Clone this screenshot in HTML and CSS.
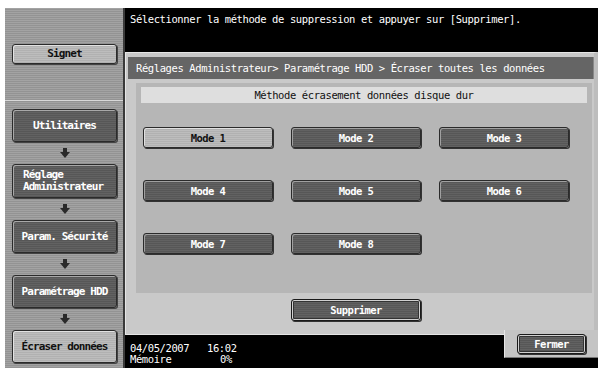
FILE: index.html
```html
<!DOCTYPE html>
<html lang="fr">
<head>
<meta charset="utf-8">
<title>Écraser toutes les données</title>
<link rel="stylesheet" href="styles.css">
</head>
<body>
<div class="screen">
  <aside class="sidebar">
    <div class="side-top">
      <button class="sbtn light">Signet</button>
    </div>
    <div class="side-bottom">
      <button class="sbtn dark">Utilitaires</button>
      <svg class="arrow" width="10" height="10" viewBox="0 0 10 10"><rect x="3" y="0" width="4" height="5" fill="#2a2a2a"/><polygon points="0,4 10,4 5,10" fill="#2a2a2a"/></svg>
      <button class="sbtn dark two">Réglage<br>Administrateur</button>
      <svg class="arrow" width="10" height="10" viewBox="0 0 10 10"><rect x="3" y="0" width="4" height="5" fill="#2a2a2a"/><polygon points="0,4 10,4 5,10" fill="#2a2a2a"/></svg>
      <button class="sbtn dark">Param. Sécurité</button>
      <svg class="arrow" width="10" height="10" viewBox="0 0 10 10"><rect x="3" y="0" width="4" height="5" fill="#2a2a2a"/><polygon points="0,4 10,4 5,10" fill="#2a2a2a"/></svg>
      <button class="sbtn dark">Paramétrage HDD</button>
      <svg class="arrow" width="10" height="10" viewBox="0 0 10 10"><rect x="3" y="0" width="4" height="5" fill="#2a2a2a"/><polygon points="0,4 10,4 5,10" fill="#2a2a2a"/></svg>
      <button class="sbtn light">Écraser données</button>
    </div>
  </aside>
  <main class="main">
    <div class="msg">Sélectionner la méthode de suppression et appuyer sur [Supprimer].</div>
    <section class="panel">
      <div class="titlebar">Réglages Administrateur&gt; Paramétrage HDD &gt; Écraser toutes les données</div>
      <div class="subpanel">
        <div class="label">Méthode écrasement données disque dur</div>
        <div class="grid">
          <button class="mbtn light">Mode 1</button>
          <button class="mbtn dark">Mode 2</button>
          <button class="mbtn dark">Mode 3</button>
          <button class="mbtn dark">Mode 4</button>
          <button class="mbtn dark">Mode 5</button>
          <button class="mbtn dark">Mode 6</button>
          <button class="mbtn dark">Mode 7</button>
          <button class="mbtn dark">Mode 8</button>
        </div>
      </div>
      <div class="actions">
        <button class="mbtn dark framed">Supprimer</button>
      </div>
    </section>
    <div class="bottom">
      <div class="status">
        <div class="srow"><span class="date">04/05/2007</span><span>16:02</span></div>
        <div class="srow"><span class="date">Mémoire</span><span class="pct">0%</span></div>
      </div>
      <div class="closebox">
        <button class="mbtn dark framed close">Fermer</button>
      </div>
    </div>
  </main>
</div>
</body>
</html>
```
FILE: styles.css
```css
* { box-sizing: border-box; }
html, body { margin: 0; padding: 0; background: #fff; }
body {
  padding: 8px 3px 0 5px;
  font-family: "DejaVu Sans Mono", "Liberation Mono", monospace;
  font-size: 10.5px;
  letter-spacing: -0.4px;
}
.screen {
  display: flex;
  width: 593px;
  height: 360px;
  overflow: hidden;
}
.sidebar {
  width: 120px;
  display: flex;
  flex-direction: column;
  background: repeating-linear-gradient(to bottom, #a3a3a3 0 1px, #939393 1px 2px);
  border-right: 2px solid #3a3a3a;
}
.side-top {
  height: 93px;
  padding: 36px 0 0 7px;
  border-bottom: 1px solid #d8d8d8;
}
.side-bottom {
  display: flex;
  flex-direction: column;
  align-items: flex-start;
  padding: 8px 0 0 7px;
}
.arrow {
  display: block;
  margin: 6px 0 6px 48px;
}
.sbtn {
  width: 105px;
  height: 33px;
  border: 1px solid #2b2b2b;
  border-radius: 3px;
  font-family: inherit;
  font-size: 11px;
  font-weight: bold;
  letter-spacing: -0.9px;
  padding: 0;
  box-shadow: inset 1px 1px 0 #a8a8a8, 1px 1px 0 #444;
  line-height: 12px;
}
.side-top .sbtn { height: 20px; }
.sbtn.two { height: 34px; text-align: left; padding-left: 10px; }
.dark {
  color: #fff;
  background: repeating-linear-gradient(to bottom, #626262 0 1px, #575757 1px 2px);
}
.light {
  color: #111;
  background: repeating-linear-gradient(to bottom, #bdbdbd 0 1px, #b1b1b1 1px 2px);
  box-shadow: inset 1px 1px 0 #e2e2e2, 1px 1px 0 #444;
}
.main {
  flex: 1;
  display: flex;
  flex-direction: column;
  background: #000;
}
.msg {
  height: 44px;
  color: #fff;
  padding: 5px 0 0 5px;
  white-space: nowrap;
}
.panel {
  height: 283px;
  background: #c9c9c9;
  border: 1px solid #e6e6e6;
  border-right: 4px solid #bdbdbd;
  padding: 4px 0 0 2px;
  display: flex;
  flex-direction: column;
}
.titlebar {
  height: 22px;
  background: #656565;
  color: #fff;
  padding: 5px 0 0 8px;
  white-space: nowrap;
  border-right: 1px solid #888;
}
.subpanel {
  margin: 4px 2px 0 8px;
  height: 210px;
  background: #b6b6b6;
  padding: 4px 5px 0 5px;
}
.label {
  height: 16px;
  background: #dedede;
  color: #111;
  text-align: center;
  line-height: 16px;
}
.grid {
  display: grid;
  grid-template-columns: repeat(3, 130px);
  grid-auto-rows: 21px;
  column-gap: 18px;
  row-gap: 32px;
  margin: 24px 0 0 2px;
}
.mbtn {
  height: 21px;
  width: 130px;
  border: 1px solid #2b2b2b;
  border-radius: 3px;
  font-family: inherit;
  font-size: 10.5px;
  font-weight: bold;
  letter-spacing: -0.6px;
  padding: 0;
  box-shadow: inset 1px 1px 0 #a0a0a0, 1px 1px 0 #333;
}
.mbtn.light { box-shadow: inset 1px 1px 0 #e0e0e0, 1px 1px 0 #333; }
.actions {
  display: flex;
  padding: 6px 0 0 163px;
}
.framed {
  height: 22px;
  border: 1px solid #1a1a1a;
  box-shadow: inset 0 0 0 1px #d0d0d0, inset 0 0 0 2px #333, 1px 1px 0 #333;
  border-radius: 3px;
}
.bottom {
  flex: 1;
  display: flex;
}
.status {
  flex: 1;
  color: #fff;
  padding: 8px 0 0 5px;
  line-height: 11px;
}
.srow { display: flex; }
.date { width: 77px; }
.pct { padding-left: 13px; }
.closebox {
  width: 94px;
  height: 28px;
  background: #c4c4c4;
  border-left: 1px solid #e6e6e6;
  border-bottom: 1px solid #777;
  margin-top: -5px;
  padding: 4px 0 0 12px;
}
.close {
  width: 69px;
  height: 20px;
}
```
